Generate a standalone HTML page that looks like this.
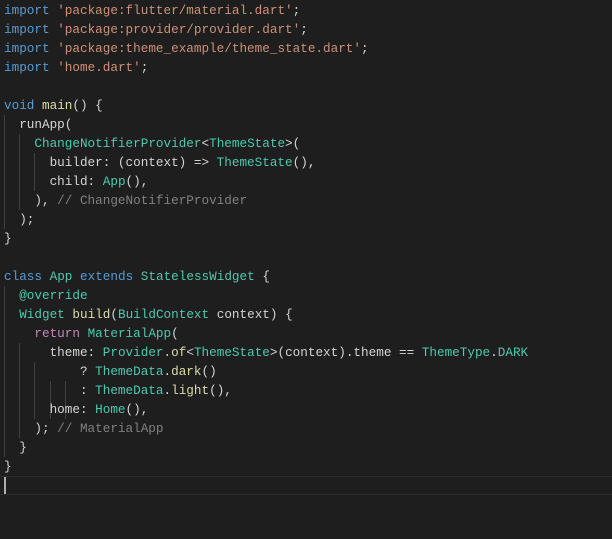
<!DOCTYPE html>
<html><head><style>
body{margin:0;background:#1e1e1e;width:612px;height:539px;overflow:hidden;position:relative}
pre{margin:0;position:absolute;left:4px;top:1px;font-family:"Liberation Mono",monospace;font-size:12.67px;line-height:19px;color:#d4d4d4}
.k{color:#569cd6}.s{color:#ce9178}.t{color:#4ec9b0}.f{color:#dcdcaa}.c{color:#808080}.p{color:#c586c0}
.g{position:absolute;width:1px;background:#404040}
.cl{position:absolute;left:0;right:0;top:476px;height:17px;border-top:1px solid #2c2c2c;border-bottom:1px solid #2c2c2c}
.cur{position:absolute;left:4px;top:477px;width:2px;height:17px;background:#aeafad}
</style></head><body>
<div class="cl"></div><div class="cur"></div>
<div class="g" style="left:4px;top:115px;height:114px"></div>
<div class="g" style="left:19px;top:134px;height:76px"></div>
<div class="g" style="left:34px;top:153px;height:38px"></div>
<div class="g" style="left:4px;top:286px;height:171px"></div>
<div class="g" style="left:19px;top:343px;height:95px"></div>
<div class="g" style="left:34px;top:362px;height:57px"></div>
<div class="g" style="left:50px;top:381px;height:38px"></div>
<div class="g" style="left:65px;top:381px;height:38px"></div>
<pre><span class="k">import</span> <span class="s">'package:flutter/material.dart'</span>;
<span class="k">import</span> <span class="s">'package:provider/provider.dart'</span>;
<span class="k">import</span> <span class="s">'package:theme_example/theme_state.dart'</span>;
<span class="k">import</span> <span class="s">'home.dart'</span>;

<span class="k">void</span> <span class="f">main</span>() {
  runApp(
    <span class="t">ChangeNotifierProvider</span>&lt;<span class="t">ThemeState</span>&gt;(
      builder: (context) =&gt; <span class="t">ThemeState</span>(),
      child: <span class="t">App</span>(),
    ), <span class="c">// ChangeNotifierProvider</span>
  );
}

<span class="k">class</span> <span class="t">App</span> <span class="k">extends</span> <span class="t">StatelessWidget</span> {
  <span class="t">@override</span>
  <span class="t">Widget</span> <span class="f">build</span>(<span class="t">BuildContext</span> context) {
    <span class="p">return</span> <span class="t">MaterialApp</span>(
      theme: <span class="t">Provider</span>.<span class="f">of</span>&lt;<span class="t">ThemeState</span>&gt;(context).theme == <span class="t">ThemeType</span>.<span class="t">DARK</span>
          ? <span class="t">ThemeData</span>.<span class="f">dark</span>()
          : <span class="t">ThemeData</span>.<span class="f">light</span>(),
      home: <span class="t">Home</span>(),
    ); <span class="c">// MaterialApp</span>
  }
}
</pre>
</body></html>
